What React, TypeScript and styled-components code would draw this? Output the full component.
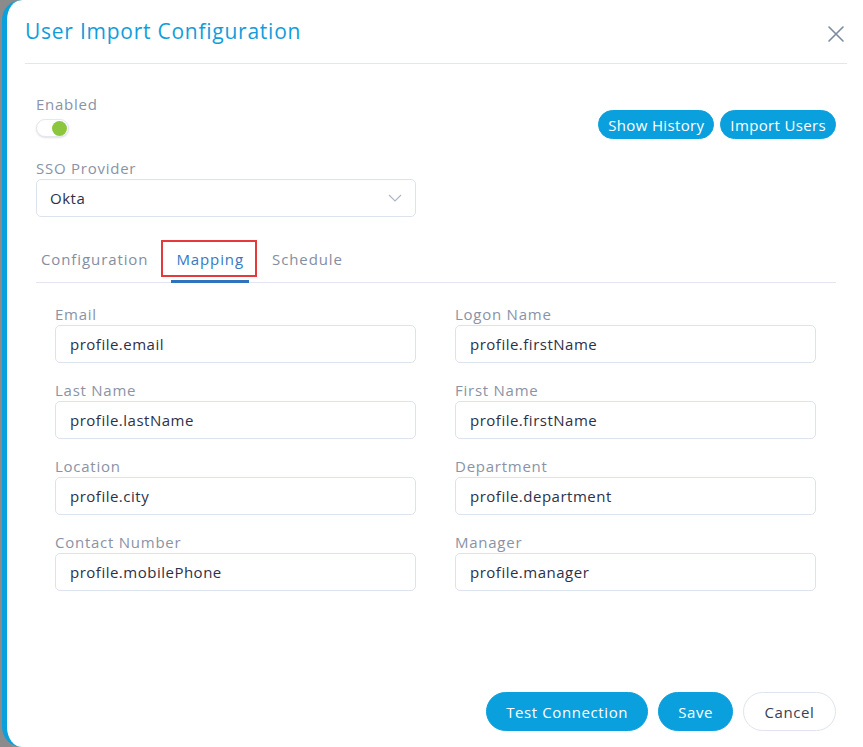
import React from 'react';
import styled, { createGlobalStyle } from 'styled-components';

const GlobalStyle = createGlobalStyle`
    html, body {
        margin: 0;
        padding: 0;
        background: #8b8b8b;
        overflow: hidden;
    }
    body {
        font-family: 'Open Sans', 'Noto Sans', sans-serif;
    }
    * {
        box-sizing: border-box;
    }
`;

const Modal = styled.div`
    margin-left: 2px;
    width: 880px;
    height: 747px;
    background: #ffffff;
    border-left: 5px solid #0aa0dd;
    border-radius: 20px;
    padding: 0 35px 0 18px;
    display: flex;
    flex-direction: column;
`;

const Header = styled.div`
    height: 64px;
    border-bottom: 1px solid #e2e6ef;
    display: flex;
    align-items: center;
    justify-content: space-between;
`;

const Title = styled.h1`
    margin: 0;
    font-size: 21px;
    font-weight: 500;
    color: #119ddc;
    letter-spacing: 0.75px;
    margin-top: -2px;
`;

const CloseButton = styled.button`
    border: none;
    background: none;
    padding: 0;
    width: 18px;
    height: 18px;
    margin-right: 2px;
    margin-top: 4px;
    display: flex;
    cursor: pointer;
`;

const Body = styled.div`
    padding: 29px 11px 0 11px;
    display: flex;
    flex-direction: column;
`;

const TopRow = styled.div`
    display: flex;
    justify-content: space-between;
    align-items: flex-end;
`;

const FieldLabel = styled.label`
    display: block;
    font-size: 15px;
    line-height: 22px;
    color: #8a93a5;
    letter-spacing: 0.75px;
`;

const Toggle = styled.div<{ $on: boolean }>`
    margin-top: 4px;
    width: 33px;
    height: 18px;
    border-radius: 9px;
    border: 1px solid #e3e7ee;
    background: #ffffff;
    box-shadow: 0 1px 2px rgba(0, 0, 0, 0.12);
    display: flex;
    align-items: center;
    justify-content: ${(p) => (p.$on ? 'flex-end' : 'flex-start')};
    padding: 0 1px;
`;

const Knob = styled.span`
    width: 15px;
    height: 15px;
    border-radius: 50%;
    background: #8cc63f;
`;

const ButtonGroup = styled.div<{ $gap: number }>`
    display: flex;
    gap: ${(p) => p.$gap}px;
`;

const PillButton = styled.button<{
    $outline?: boolean;
    $h: number;
    $px: number;
    $ls?: number;
}>`
    height: ${(p) => p.$h}px;
    padding: 0 ${(p) => p.$px}px;
    border-radius: ${(p) => p.$h / 2}px;
    border: 1px solid ${(p) => (p.$outline ? '#dfe4ee' : '#0aa0dd')};
    background: ${(p) => (p.$outline ? '#ffffff' : '#0aa0dd')};
    color: ${(p) => (p.$outline ? '#3a3f55' : '#ffffff')};
    font-family: inherit;
    font-size: 15px;
    font-weight: 500;
    letter-spacing: ${(p) => p.$ls ?? 0.6}px;
    white-space: nowrap;
    cursor: pointer;
`;

const TopButtons = styled(ButtonGroup)`
    margin-bottom: -2px;
`;

const SsoBlock = styled.div`
    margin-top: 20px;
    width: 380px;
`;

const SelectBox = styled.div`
    height: 38px;
    border: 1px solid #dde3ed;
    border-radius: 5px;
    display: flex;
    align-items: center;
    justify-content: space-between;
    padding: 0 13px 0 13px;
    font-size: 15px;
    color: #2c3149;
    letter-spacing: 0.5px;
`;

const TabBar = styled.div`
    margin-top: 23px;
    display: flex;
    gap: 18px;
    border-bottom: 1px solid #e2e6ef;
`;

const Tab = styled.div<{ $active?: boolean }>`
    position: relative;
    padding: 8px 5px 12px;
    font-size: 15px;
    line-height: 22px;
    letter-spacing: 0.9px;
    color: ${(p) => (p.$active ? '#3579c4' : '#848ea2')};
    font-weight: ${(p) => (p.$active ? 500 : 400)};
    cursor: pointer;

    ${(p) =>
        p.$active &&
        `
        &::after {
            content: '';
            position: absolute;
            left: 0;
            right: 0;
            bottom: -1px;
            height: 3px;
            background: #2f72bd;
        }
    `}
`;

const Highlight = styled.span`
    position: absolute;
    left: -10px;
    right: -8px;
    top: 0;
    height: 37px;
    border: 2px solid #e5393b;
    pointer-events: none;
`;

const FieldGrid = styled.div`
    margin-top: 20px;
    padding: 0 20px 0 19px;
    display: grid;
    grid-template-columns: 1fr 1fr;
    column-gap: 39px;
    row-gap: 16px;
`;

const Field = styled.div`
    display: flex;
    flex-direction: column;
`;

const TextInput = styled.div`
    height: 38px;
    border: 1px solid #dde3ed;
    border-radius: 5px;
    display: flex;
    align-items: center;
    padding: 0 14px;
    font-size: 15px;
    color: #2c3149;
    letter-spacing: 0.5px;
`;

const Footer = styled.div`
    margin-top: auto;
    padding: 0 11px 16px 0;
    display: flex;
    justify-content: flex-end;
`;

const mapping: [string, string][] = [
    ['Email', 'profile.email'],
    ['Logon Name', 'profile.firstName'],
    ['Last Name', 'profile.lastName'],
    ['First Name', 'profile.firstName'],
    ['Location', 'profile.city'],
    ['Department', 'profile.department'],
    ['Contact Number', 'profile.mobilePhone'],
    ['Manager', 'profile.manager'],
];

export default function App() {
    return (
        <>
            <GlobalStyle />
            <Modal>
                <Header>
                    <Title>User Import Configuration</Title>
                    <CloseButton aria-label="Close">
                        <svg width="18" height="18" viewBox="0 0 18 18">
                            <path
                                d="M2 2 L16 16 M16 2 L2 16"
                                stroke="#7b8aa0"
                                strokeWidth="1.6"
                                strokeLinecap="round"
                            />
                        </svg>
                    </CloseButton>
                </Header>

                <Body>
                    <TopRow>
                        <div>
                            <FieldLabel>Enabled</FieldLabel>
                            <Toggle $on>
                                <Knob />
                            </Toggle>
                        </div>
                        <TopButtons $gap={6}>
                            <PillButton $h={29} $px={9} $ls={0.35}>
                                Show History
                            </PillButton>
                            <PillButton $h={29} $px={9} $ls={0.35}>
                                Import Users
                            </PillButton>
                        </TopButtons>
                    </TopRow>

                    <SsoBlock>
                        <FieldLabel>SSO Provider</FieldLabel>
                        <SelectBox>
                            <span>Okta</span>
                            <svg width="14" height="8" viewBox="0 0 14 8">
                                <path
                                    d="M1 1 L7 7 L13 1"
                                    stroke="#aab4c6"
                                    strokeWidth="1.1"
                                    fill="none"
                                />
                            </svg>
                        </SelectBox>
                    </SsoBlock>

                    <TabBar>
                        <Tab>Configuration</Tab>
                        <Tab $active>
                            Mapping
                            <Highlight />
                        </Tab>
                        <Tab>Schedule</Tab>
                    </TabBar>

                    <FieldGrid>
                        {mapping.map(([label, value]) => (
                            <Field key={label}>
                                <FieldLabel>{label}</FieldLabel>
                                <TextInput>{value}</TextInput>
                            </Field>
                        ))}
                    </FieldGrid>
                </Body>

                <Footer>
                    <ButtonGroup $gap={10}>
                        <PillButton $h={39} $px={19}>
                            Test Connection
                        </PillButton>
                        <PillButton $h={39} $px={19}>
                            Save
                        </PillButton>
                        <PillButton $h={39} $px={20.5} $outline>
                            Cancel
                        </PillButton>
                    </ButtonGroup>
                </Footer>
            </Modal>
        </>
    );
}
